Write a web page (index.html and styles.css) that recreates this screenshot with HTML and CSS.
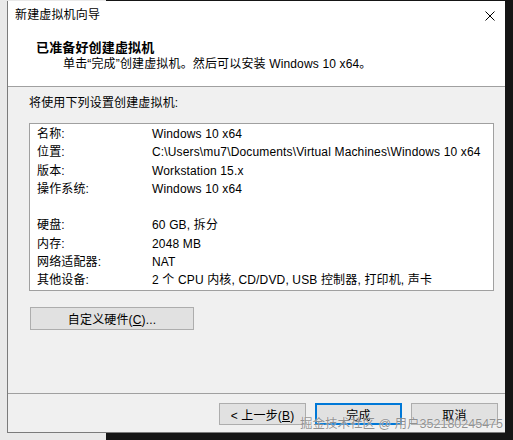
FILE: index.html
```html
<!DOCTYPE html>
<html lang="zh-CN">
  <head>
    <meta charset="UTF-8" />
    <title>新建虚拟机向导</title>
    <link rel="stylesheet" href="styles.css">
  </head>
  <body>
    <div class="window">
      <div class="titlebar">
        <span class="title">新建虚拟机向导</span>
        <svg class="close" width="10" height="10" viewBox="0 0 10 10">
          <path d="M0.5 0.5 L9.5 9.5 M9.5 0.5 L0.5 9.5" stroke="#000" stroke-width="1" fill="none" />
        </svg>
      </div>
      <div class="header">
        <div class="heading">已准备好创建虚拟机</div>
        <div class="subheading">单击“完成”创建虚拟机。然后可以安装 Windows 10 x64。</div>
      </div>
      <div class="content">
        <div class="intro">将使用下列设置创建虚拟机:</div>
        <div class="summary">
          <div class="row"><span class="key">名称:</span><span>Windows 10 x64</span></div>
          <div class="row"><span class="key">位置:</span><span>C:\Users\mu7\Documents\Virtual Machines\Windows 10 x64</span></div>
          <div class="row"><span class="key">版本:</span><span>Workstation 15.x</span></div>
          <div class="row"><span class="key">操作系统:</span><span>Windows 10 x64</span></div>
          <div class="row blank"></div>
          <div class="row"><span class="key">硬盘:</span><span>60 GB, 拆分</span></div>
          <div class="row"><span class="key">内存:</span><span>2048 MB</span></div>
          <div class="row"><span class="key">网络适配器:</span><span>NAT</span></div>
          <div class="row"><span class="key">其他设备:</span><span>2 个 CPU 内核, CD/DVD, USB 控制器, 打印机, 声卡</span></div>
        </div>
        <button class="btn btn-custom">自定义硬件(<u>C</u>)...</button>
      </div>
      <div class="footer">
        <button class="btn">&lt; 上一步(<u>B</u>)</button>
        <button class="btn default">完成</button>
        <button class="btn">取消</button>
      </div>
      <div class="watermark">掘金技术社区 @ 用户352180245475</div>
    </div>
  </body>
</html>
```

FILE: styles.css
```css
body {
  margin: 0;
  height: 440px;
  overflow: hidden;
  font-family: "Liberation Sans", "Noto Sans CJK SC", sans-serif;
  font-size: 12px;
  letter-spacing: 0.15px;
  color: #000;
  background: linear-gradient(to right, #e9e9e9 106px, #151515 106px);
}
.window {
  position: relative;
  margin: 1px 0 0 7px;
  width: 497px;
  height: 431px;
  border-left: 1px solid #7b7b7b;
  border-bottom: 1px solid #7b7b7b;
  background: #f0f0f0;
  display: flex;
  flex-direction: column;
}
.titlebar {
  height: 29px;
  background: #fff;
  display: flex;
  align-items: center;
  justify-content: space-between;
  padding: 0 10px 0 7px;
}
.title {
  line-height: 29px;
}
.close {
  display: block;
}
.header {
  height: 57px;
  box-sizing: border-box;
  padding: 9px 0 0 28px;
  background: #fff;
  border-bottom: 1px solid #a0a0a0;
}
.heading {
  font-weight: bold;
  font-size: 13px;
  line-height: 17px;
}
.subheading {
  line-height: 16px;
  padding-left: 27px;
}
.content {
  flex: 1;
  padding: 7px 0 0 21px;
}
.intro {
  line-height: 18px;
  margin-bottom: 11px;
}
.summary {
  width: 465px;
  height: 168px;
  box-sizing: border-box;
  border: 1px solid #a0a0a0;
  background: #fff;
  padding: 1px 0 0 7px;
}
.row {
  display: flex;
  line-height: 18.3px;
  height: 18.3px;
  white-space: nowrap;
}
.key {
  width: 115px;
  flex: none;
}
.btn {
  font: inherit;
  letter-spacing: inherit;
  color: #000;
  background: #e1e1e1;
  border: 1px solid #adadad;
  padding: 0;
  height: 22px;
  width: 87px;
}
.btn-custom {
  display: block;
  margin: 16px 0 0 1px;
  width: 164px;
  height: 23px;
}
.footer {
  height: 39px;
  box-sizing: border-box;
  border-top: 1px solid #a0a0a0;
  display: flex;
  justify-content: flex-end;
  gap: 9px;
  padding: 9px 7px 0 0;
}
.btn.default {
  border: 2px solid #0078d7;
}
.watermark {
  position: absolute;
  right: 2px;
  bottom: 0;
  font-size: 12.5px;
  line-height: 16px;
  letter-spacing: 0;
  color: rgba(110, 110, 110, 0.75);
  text-shadow: 0 0 1px #fff;
}
```
